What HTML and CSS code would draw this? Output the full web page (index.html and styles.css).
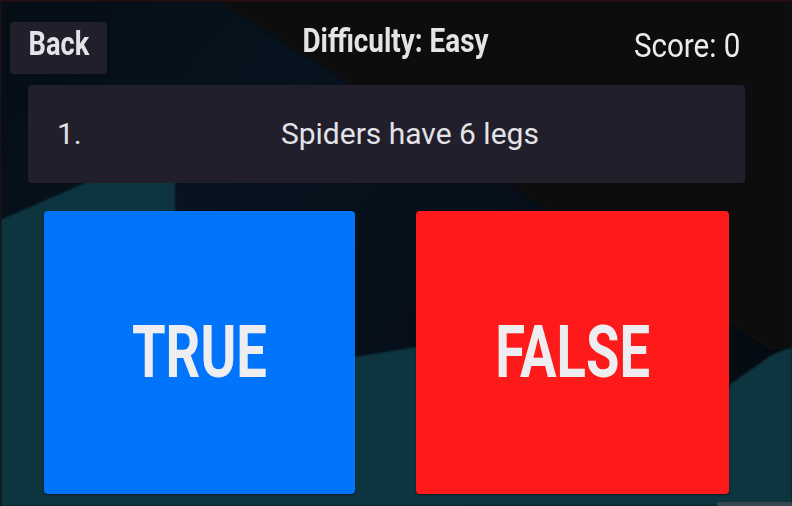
FILE: index.html
```html
<!DOCTYPE html>
<html lang="en">
<head>
<meta charset="utf-8">
<title>Quiz</title>
<link rel="stylesheet" href="styles.css">
</head>
<body>
<div class="screen">
  <svg class="backdrop" viewBox="0 0 792 506" preserveAspectRatio="none" aria-hidden="true">
    <defs>
      <linearGradient id="navy" x1="0" y1="0" x2="1" y2="0.6">
        <stop offset="0" stop-color="#050d15"/>
        <stop offset="0.35" stop-color="#07131f"/>
        <stop offset="1" stop-color="#050b13"/>
      </linearGradient>
      <filter id="soft" x="-5%" y="-5%" width="110%" height="110%">
        <feGaussianBlur stdDeviation="1.2"/>
      </filter>
    </defs>
    <rect width="792" height="506" fill="url(#navy)"/>
    <polygon class="teal" points="0,220 175,144 175,386 416,347 560,330 729,385 770,356 792,346 792,506 0,506" filter="url(#soft)"/>
    <polygon class="dark" points="217,0 792,0 792,348 770,350" filter="url(#soft)"/>
    <rect class="edge-top" x="0" y="0" width="792" height="1.5"/>
    <rect class="edge-left" x="0" y="0" width="1.5" height="506"/>
    <rect class="corner-bar" x="717" y="502" width="75" height="4"/>
  </svg>

  <div class="content">
    <header class="topbar">
      <button class="back"><span class="cond-bold cond-back">Back</span></button>
      <div class="title"><span class="cond-bold">Difficulty: Easy</span></div>
      <div class="score"><span class="cond-reg">Score: 0</span></div>
    </header>

    <section class="question">
      <span class="q-num">1.</span>
      <span class="q-text">Spiders have 6 legs</span>
    </section>

    <div class="answers">
      <button class="answer answer-true"><span class="cond-big">TRUE</span></button>
      <button class="answer answer-false"><span class="cond-big">FALSE</span></button>
    </div>
  </div>
</div>
</body>
</html>
```

FILE: styles.css
```css
* { box-sizing: border-box; }

html, body {
  margin: 0;
  padding: 0;
  background: #050d15;
}

.screen {
  position: relative;
  width: 792px;
  height: 506px;
  overflow: hidden;
  font-family: Roboto, "Noto Sans", "Liberation Sans", sans-serif;
  color: #e7e7ea;
}

.backdrop {
  position: absolute;
  inset: 0;
  width: 792px;
  height: 506px;
  z-index: 0;
}

.teal { fill: #0a3540; }
.dark { fill: #0b0b0b; }
.edge-top { fill: #2a0c13; }
.edge-left { fill: #1b1216; }
.corner-bar { fill: #34454b; }

.content {
  position: relative;
  z-index: 1;
  display: flex;
  flex-direction: column;
}

.cond-bold,
.cond-reg,
.cond-big {
  display: inline-block;
  white-space: nowrap;
}

.cond-bold { font-weight: 700; transform: scaleX(0.82); }
.cond-back { transform: scaleX(0.8); }
.cond-reg { font-weight: 400; transform: scaleX(0.87); transform-origin: right center; }
.cond-big { font-weight: 700; transform: scaleX(0.755); }

.topbar {
  display: grid;
  grid-template-columns: 1fr auto 1fr;
  align-items: start;
  height: 85px;
}

.back {
  justify-self: start;
  margin: 22px 0 0 10px;
  width: 97px;
  height: 52px;
  padding: 1px 0 0;
  border: 0;
  border-radius: 4px;
  background: #221f2c;
  color: #e4e4e8;
  font-family: inherit;
  font-size: 34px;
  line-height: 40px;
  text-align: center;
  display: flex;
  align-items: flex-start;
  justify-content: center;
}

.title {
  margin-top: 20px;
  font-size: 34px;
  line-height: 40px;
  color: #e4e4e6;
  text-align: center;
}

.score {
  justify-self: end;
  margin: 25px 52px 0 0;
  font-size: 34px;
  line-height: 40px;
  color: #ececee;
}

.question {
  display: flex;
  align-items: center;
  height: 98px;
  margin: 0 47px 0 28px;
  padding: 0 7px 0 29px;
  border-radius: 4px;
  background: #221f2c;
  font-size: 30px;
  line-height: 36px;
  color: #e3e3e7;
}

.q-num { flex: none; }

.q-text {
  flex: 1;
  text-align: center;
}

.answers {
  display: grid;
  grid-template-columns: 311px 313px;
  column-gap: 61px;
  margin: 28px 0 0 44px;
}

.answer {
  height: 283px;
  border: 0;
  border-radius: 4px;
  font-family: inherit;
  font-size: 72px;
  line-height: 80px;
  color: #eeeef0;
  display: flex;
  align-items: center;
  justify-content: center;
  padding: 0;
  box-shadow: 0 1px 2px rgba(0, 0, 0, 0.55);
}

.answer-true { background: #0074fb; }
.answer-false { background: #fe1a1a; }
```
